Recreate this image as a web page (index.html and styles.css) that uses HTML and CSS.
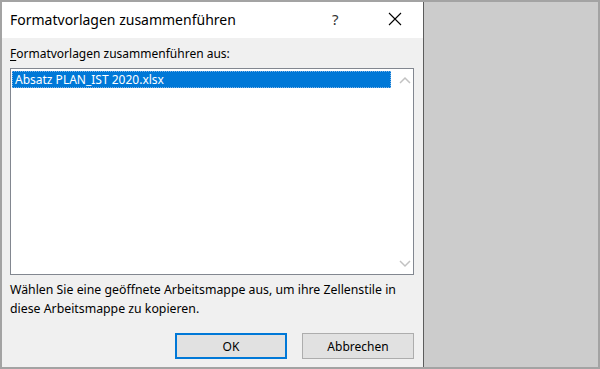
FILE: index.html
```html
<!DOCTYPE html>
<html lang="de">
<head>
<meta charset="utf-8">
<title>Formatvorlagen zusammenführen</title>
<link rel="stylesheet" href="styles.css">
</head>
<body>
<div class="frame">
  <div class="dialog">
    <div class="titlebar">
      <div class="title">Formatvorlagen zusammenführen</div>
      <div class="help">?</div>
      <div class="close">
        <svg width="14" height="14" viewBox="0 0 14 14"><path d="M1 1 L13 13 M13 1 L1 13" stroke="#000" stroke-width="1.1" fill="none"/></svg>
      </div>
    </div>
    <div class="content">
      <div class="label"><span class="acc">F</span>ormatvorlagen zusammenführen aus:</div>
      <div class="listbox">
        <div class="items">
          <div class="item selected">Absatz PLAN_IST 2020.xlsx</div>
        </div>
        <div class="scrollbar">
          <svg class="arrow" width="12" height="8" viewBox="0 0 12 8"><path d="M1 7 L6 2 L11 7" stroke="#c2c2c2" stroke-width="1.5" fill="none"/></svg>
          <svg class="arrow" width="12" height="8" viewBox="0 0 12 8"><path d="M1 1 L6 6 L11 1" stroke="#c2c2c2" stroke-width="1.5" fill="none"/></svg>
        </div>
      </div>
      <div class="desc">Wählen Sie eine geöffnete Arbeitsmappe aus, um ihre Zellenstile in diese Arbeitsmappe zu kopieren.</div>
      <div class="buttons">
        <button class="btn default">OK</button>
        <button class="btn">Abbrechen</button>
      </div>
    </div>
  </div>
  <div class="side"></div>
</div>
</body>
</html>
```
FILE: styles.css
```css
html, body {
  margin: 0;
  padding: 0;
}
body {
  font-family: "Noto Sans", "Open Sans", sans-serif;
  color: #000;
}
.frame {
  width: 600px;
  height: 369px;
  box-sizing: border-box;
  border: 2px solid #a3a3a3;
  display: flex;
  overflow: hidden;
}
.dialog {
  width: 421px;
  border-right: 1px solid #5c5c5c;
  display: flex;
  flex-direction: column;
}
.side {
  flex: 1;
  background: #cccccc;
}
.titlebar {
  height: 36px;
  background: #ffffff;
  display: flex;
  align-items: center;
}
.title {
  flex: 1;
  padding-left: 8px;
  font-size: 14px;
  padding-bottom: 2px;
}
.help {
  width: 14px;
  font-size: 15px;
  margin-right: 42px;
  padding-bottom: 2px;
  color: #333;
}
.close {
  width: 14px;
  height: 14px;
  margin-right: 21px;
  margin-bottom: 2px;
}
.close svg {
  display: block;
}
.content {
  flex: 1;
  background: #f0f0f0;
  padding: 8px 9px 0 8px;
  display: flex;
  flex-direction: column;
  font-size: 12px;
}
.label {
  height: 16px;
  line-height: 16px;
  margin-bottom: 6px;
}
.acc {
  text-decoration: underline;
  text-underline-offset: 2px;
}
.listbox {
  height: 207px;
  box-sizing: border-box;
  border: 1px solid #828790;
  background: #ffffff;
  display: flex;
}
.items {
  flex: 1;
  padding: 2px 5px 0 1px;
}
.item {
  height: 17px;
  box-sizing: border-box;
  line-height: 15px;
  padding-left: 2px;
  font-size: 12px;
}
.item.selected {
  background: #0078d7;
  color: #ffffff;
  border: 1px dotted #7fb4e6;
}
.scrollbar {
  width: 17px;
  display: flex;
  flex-direction: column;
  justify-content: space-between;
  align-items: center;
  padding: 7px 0 6px;
}
.arrow {
  display: block;
}
.desc {
  margin-top: 5px;
  line-height: 19px;
  width: 400px;
  font-size: 12.3px;
}
.buttons {
  display: flex;
  justify-content: flex-end;
  gap: 15px;
  margin-top: 15px;
}
.btn {
  width: 112px;
  height: 26px;
  box-sizing: border-box;
  background: #e1e1e1;
  border: 1px solid #adadad;
  font-family: inherit;
  font-size: 12px;
  color: #000;
  padding: 0;
}
.btn.default {
  border: 2px solid #0078d7;
}
```
